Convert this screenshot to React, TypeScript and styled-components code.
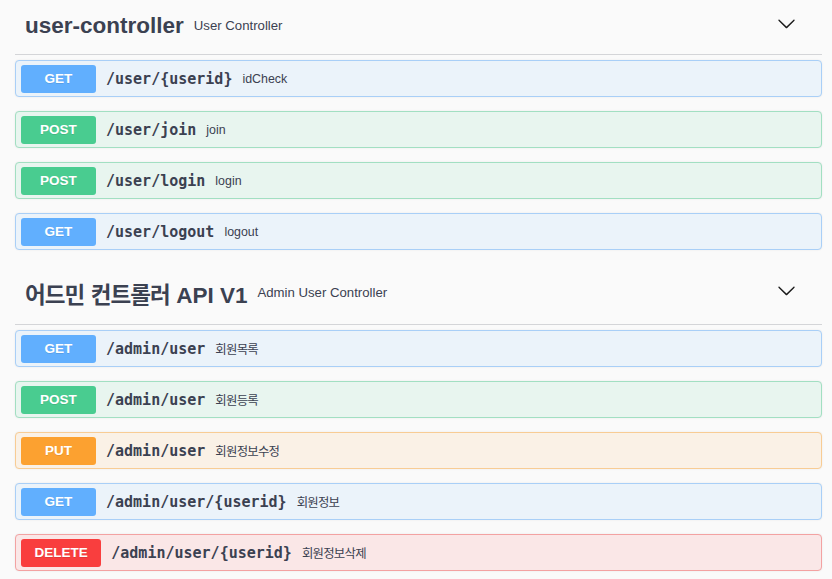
import React from "react";
import styled, { createGlobalStyle } from "styled-components";

type Method = "GET" | "POST" | "PUT" | "DELETE";

const palette: Record<Method, { main: string; bg: string; border: string }> = {
  GET: { main: "#61affe", bg: "#ebf3fa", border: "#a9cff7" },
  POST: { main: "#49cc90", bg: "#e8f5ef", border: "#a2dfc2" },
  PUT: { main: "#fca130", bg: "#faf1e6", border: "#f8cc94" },
  DELETE: { main: "#f93e3e", bg: "#fae7e7", border: "#f3a2a2" },
};

const GlobalStyle = createGlobalStyle`
  html, body {
    margin: 0;
    padding: 0;
    background: #fafafa;
  }
  body {
    font-family: "Liberation Sans", "Noto Sans CJK KR", sans-serif;
    color: #3b4151;
  }
`;

const Page = styled.div`
  width: 807px;
  padding: 0 10px 0 15px;
`;

const Section = styled.section`
  display: flex;
  flex-direction: column;
`;

const TagHeader = styled.div<{ $h: number }>`
  display: flex;
  align-items: center;
  box-sizing: border-box;
  height: ${(p) => p.$h}px;
  padding: 0 26px 3px 10px;
  border-bottom: 1px solid rgba(59, 65, 81, 0.2);
  margin-bottom: 5px;
`;

const TagName = styled.h3`
  margin: 0;
  font-family: "Liberation Sans", "Noto Sans CJK KR", sans-serif;
  font-weight: 700;
  font-size: 22.5px;
  color: #3b4151;
  white-space: nowrap;
`;

const Ko = styled.span<{ $ls: number }>`
  letter-spacing: ${(p) => p.$ls}em;
`;

const TagDesc = styled.small`
  flex: 1;
  margin-left: 10px;
  font-size: 13.2px;
  color: #3b4151;
  font-family: "Liberation Sans", "Noto Sans CJK KR", sans-serif;
`;

const Chevron = styled.svg`
  width: 19px;
  height: 19px;
  flex: none;
  fill: #1b1b1b;
  margin-top: -4px;
`;

const OpBlock = styled.div<{ $m: Method }>`
  display: flex;
  align-items: center;
  box-sizing: border-box;
  height: 37px;
  padding: 0 5px;
  margin-bottom: 14px;
  border: 1px solid ${(p) => palette[p.$m].border};
  border-radius: 4px;
  background: ${(p) => palette[p.$m].bg};
  box-shadow: 0 0 2px rgba(0, 0, 0, 0.08);
`;

const MethodBadge = styled.span<{ $m: Method }>`
  box-sizing: border-box;
  min-width: 75px;
  height: 28px;
  line-height: 28px;
  padding: 0 13.5px;
  border-radius: 3px;
  background: ${(p) => palette[p.$m].main};
  color: #fff;
  font-family: "Liberation Sans", sans-serif;
  font-weight: 700;
  font-size: 13.5px;
  text-align: center;
  text-shadow: 0 1px 0 rgba(0, 0, 0, 0.1);
`;

const Path = styled.span`
  margin-left: 10px;
  font-family: "DejaVu Sans Mono", monospace;
  font-weight: 700;
  font-size: 15px;
  color: #3b4151;
`;

const OpDesc = styled.span`
  margin-left: 10px;
  font-family: "Liberation Sans", "Noto Sans CJK KR", sans-serif;
  font-size: 12.4px;
  color: #3b4151;
`;

const isKo = (s: string) => /[\uac00-\ud7a3]/.test(s);

const Text: React.FC<{ text: string; ls: number }> = ({ text, ls }) => {
  if (!isKo(text)) return <>{text}</>;
  const parts = text.split(/([\uac00-\ud7a3]+)/).filter((p) => p !== "");
  return (
    <>
      {parts.map((p, i) =>
        isKo(p) ? (
          <Ko key={i} $ls={ls}>
            {p}
          </Ko>
        ) : (
          <React.Fragment key={i}>{p}</React.Fragment>
        )
      )}
    </>
  );
};

const ChevronIcon = () => (
  <Chevron viewBox="0 0 20 20" aria-hidden="true">
    <path d="M17.418 6.109c.272-.268.709-.268.979 0s.271.701 0 .969l-7.908 7.83c-.27.268-.707.268-.979 0l-7.908-7.83c-.27-.268-.27-.701 0-.969.271-.268.709-.268.979 0L10 13.25l7.418-7.141z" />
  </Chevron>
);

type Op = { m: Method; path: string; desc: string };
type Tag = { name: string; desc: string; h: number; ops: Op[] };

const tags: Tag[] = [
  {
    name: "user-controller",
    desc: "User Controller",
    h: 55,
    ops: [
      { m: "GET", path: "/user/{userid}", desc: "idCheck" },
      { m: "POST", path: "/user/join", desc: "join" },
      { m: "POST", path: "/user/login", desc: "login" },
      { m: "GET", path: "/user/logout", desc: "logout" },
    ],
  },
  {
    name: "어드민 컨트롤러 API V1",
    desc: "Admin User Controller",
    h: 61,
    ops: [
      { m: "GET", path: "/admin/user", desc: "회원목록" },
      { m: "POST", path: "/admin/user", desc: "회원등록" },
      { m: "PUT", path: "/admin/user", desc: "회원정보수정" },
      { m: "GET", path: "/admin/user/{userid}", desc: "회원정보" },
      { m: "DELETE", path: "/admin/user/{userid}", desc: "회원정보삭제" },
    ],
  },
];

export default function App() {
  return (
    <>
      <GlobalStyle />
      <Page>
        {tags.map((t) => (
          <Section key={t.name}>
            <TagHeader $h={t.h}>
              <TagName>
                <Text text={t.name} ls={-0.04} />
              </TagName>
              <TagDesc>{t.desc}</TagDesc>
              <ChevronIcon />
            </TagHeader>
            {t.ops.map((o, i) => (
              <OpBlock key={i} $m={o.m}>
                <MethodBadge $m={o.m}>{o.m}</MethodBadge>
                <Path>{o.path}</Path>
                <OpDesc>
                  <Text text={o.desc} ls={-0.06} />
                </OpDesc>
              </OpBlock>
            ))}
          </Section>
        ))}
      </Page>
    </>
  );
}
